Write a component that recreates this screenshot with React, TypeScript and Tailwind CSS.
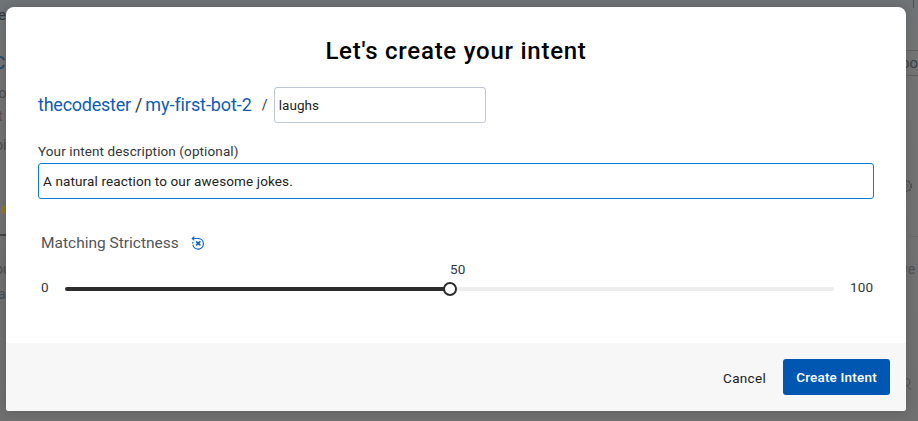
import React from "react";

function ResetIcon() {
  return (
    <svg width="14" height="14" viewBox="0 0 14 14" fill="none" stroke="#0a62c0" strokeWidth="1.2">
      <path d="M1.400 2.500H7.500a5.300 5.300 0 1 1-5.600 6.400M1.600 7.600l.3-1.500" />
      <path d="M3.300.6 1.300 2.500l2 1.900" />
      <path d="m5.100 5.400 4.300 4M9.400 5.400l-4.300 4" strokeWidth="1.500" />
    </svg>
  );
}

function LeftEdge() {
  return (
    <div className="flex w-[6px] flex-col items-start overflow-hidden pt-[5px] text-[#4b4d50]">
      <span className="-ml-[2px] h-[48px] text-[15px] text-[#333638]">e</span>
      <span className="-ml-[7px] h-[30px] text-[19px] text-[#24496f]">C</span>
      <span className="-ml-[6px] h-[23px]">to</span>
      <span className="-ml-[2px] h-[29px] text-[#62503c]">t</span>
      <span className="-ml-[5px] h-[71px]">oi</span>
      <span className="ml-px h-[8px] w-[8px] shrink-0 rounded-[3px] bg-[#94762e]" />
      <span className="mt-[20px] h-[2px] w-full bg-[#444]" />
      <span className="mt-[23px] -ml-[5px] h-[25px]">ou</span>
      <span className="-ml-[2px]">a</span>
    </div>
  );
}

function RightEdge() {
  return (
    <div className="flex w-[12px] flex-col items-start overflow-hidden text-[#4b4d50]">
      <span className="ml-[7px] h-[8px] w-px bg-[#4a4e50]" />
      <div className="mt-[42px] flex h-[26px] w-full items-center border-y border-[#5d5d5d] text-[15px] text-[#3c3e40]">
        <span className="-ml-[5px]">oo</span>
      </div>
      <svg className="mt-[103px] -ml-[7px] shrink-0" width="14" height="14" viewBox="0 0 14 14" fill="none" stroke="#4b4b4b">
        <circle cx="7" cy="7" r="5.600" strokeWidth="1.200" strokeDasharray="2.200 1.320" />
        <circle cx="7" cy="7" r="4.500" strokeWidth=".8" />
        <circle cx="7" cy="7" r="1.800" strokeWidth=".8" />
      </svg>
      <span className="mt-[43px] h-px w-full bg-[#686868]" />
      <span className="mt-[22px] -ml-[5px] h-[119px]">ve</span>
      <svg className="-ml-[7px] shrink-0" width="13" height="13" viewBox="0 0 13 13" fill="none" stroke="#484b50">
        <circle cx="7.500" cy="4" r="3.500" />
        <path d="M6 7.500h2l4 4.500" />
      </svg>
    </div>
  );
}

function Slider() {
  return (
    <div className="flex items-center text-[13.5px] leading-5 tracking-[0.15px] text-[#32363a]">
      <span className="w-[24px]">0</span>
      <div className="relative mt-[3px] h-1 w-[769px] rounded-full bg-[#ededed]">
        <div className="h-1 w-1/2 rounded-full bg-[#2d2d2d]" />
        <span className="absolute left-[378px] -top-[5px] size-[14px] rounded-full border-2 border-[#2d2d2d] bg-white" />
        <span className="absolute left-[385px] -top-[28px]">50</span>
      </div>
      <span className="ml-4">100</span>
    </div>
  );
}

function Dialog() {
  return (
    <div className="mt-[7px] flex h-[404px] w-[900px] flex-col overflow-hidden rounded-t-lg rounded-b-[3px] bg-white shadow-[0_0_12px_#00000030]">
      <main className="h-[336px] px-8 pt-7">
        <h1 className="text-center text-2xl leading-8 font-medium tracking-[0.75px] text-black">Let's create your intent</h1>
        <div className="mt-5 flex items-center text-lg leading-6 text-[#0f5cb2]">
          <a className="tracking-[-0.24px]">thecodester</a>
          <span className="mr-[3px] ml-1 text-[#32363a]">/</span>
          <a className="tracking-[-0.08px]">my-first-bot-2</a>
          <span className="ml-[10px] w-[12px] text-sm text-[#32363a]">/</span>
          <input className="h-9 w-[212px] rounded-[3px] border border-[#bdc8d3] px-1 text-[13.5px] tracking-[0.03px] text-[#222] outline-none" defaultValue="laughs" />
        </div>
        <label className="mt-[18px] block text-[13.5px] leading-5 tracking-[0.11px] text-[#32363a]">Your intent description (optional)</label>
        <input className="mt-[2px] block h-9 w-[836px] rounded-[3px] border border-[#0a7bd6] px-1 text-[13.5px] tracking-[0.13px] text-[#222] outline-none" defaultValue="A natural reaction to our awesome jokes." />
        <div className="mt-8 ml-[3px] flex items-center text-[15.5px] leading-6 text-[#515559]">
          <span>Matching Strictness</span>
          <span className="ml-3"><ResetIcon /></span>
        </div>
        <div className="mt-[22px] ml-[3px]"><Slider /></div>
      </main>
      <footer className="flex h-[68px] items-center justify-end bg-[#f7f7f7] pr-4 text-[13.5px]">
        <button className="mr-[17px] pt-[2px] tracking-[0.3px] text-[#222]">Cancel</button>
        <button className="h-9 w-[107px] rounded-[3px] bg-[#0057b2] font-medium tracking-[0.2px] text-white">Create Intent</button>
      </footer>
    </div>
  );
}

export default function App() {
  return (
    <div className="flex h-[421px] w-[918px] overflow-hidden bg-linear-to-b from-[#6f7477] via-[#747474] via-12% to-[#707070] font-['Roboto','Liberation_Sans',sans-serif] text-sm leading-5 whitespace-nowrap">
      <LeftEdge />
      <Dialog />
      <RightEdge />
    </div>
  );
}
